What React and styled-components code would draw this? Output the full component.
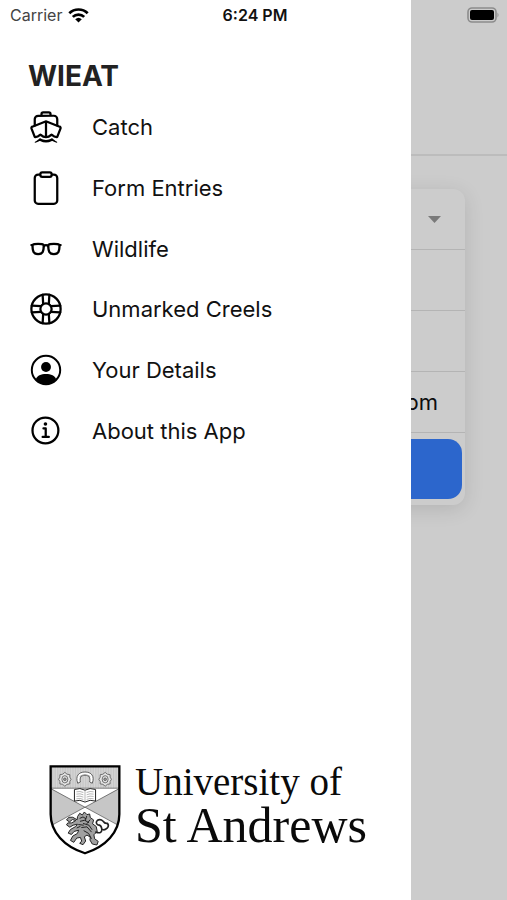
import React from "react";
import styled, { createGlobalStyle } from "styled-components";
import {
    IoBoatOutline,
    IoClipboardOutline,
    IoGlassesOutline,
    IoHelpBuoyOutline,
    IoInformationCircleOutline,
} from "react-icons/io5";

const GlobalStyle = createGlobalStyle`
    * {
        box-sizing: border-box;
    }
    body {
        margin: 0;
        background: #ffffff;
        color: #111111;
        font-family: Inter, "Liberation Sans", sans-serif;
    }
`;

const Page = styled.div`
    position: relative;
    min-height: 100vh;
    overflow: hidden;
`;

const StatusBar = styled.div`
    position: absolute;
    top: 0;
    left: 0;
    right: 0;
    display: grid;
    grid-template-columns: 1fr auto 1fr;
    align-items: center;
    height: 30px;
    padding: 0 7px 0 10px;
    font-size: 16px;
`;
const Carrier = styled.div`
    display: flex;
    align-items: center;
    gap: 6px;
    color: #444444;
`;
const Clock = styled.div`
    font-weight: 600;
`;
const Battery = styled.svg`
    justify-self: end;
`;

const Header = styled.header`
    height: 156px;
    border-bottom: 2px solid #ebebeb;
`;
const Card = styled.form`
    margin: 33px 42px;
    padding-bottom: 6px;
    border-radius: 12px;
    background: #ffffff;
    box-shadow: 0 4px 20px rgba(0, 0, 0, 0.12);
`;
const Field = styled.div`
    display: flex;
    align-items: center;
    height: 61px;
    padding: 0 24px;
    border-bottom: 1px solid #e2e2e2;
`;
const Select = styled.select`
    flex: 1;
    min-width: 0;
    border: 0;
    background: none;
    appearance: none;
`;
const Input = styled.input`
    flex: 1;
    min-width: 0;
    padding: 0 3px;
    border: 0;
    background: none;
    color: #111111;
    font: inherit;
    font-size: 22px;
    text-align: right;
`;
const Submit = styled.button`
    display: block;
    width: calc(100% - 6px);
    height: 60px;
    margin: 6px 3px 0;
    border: 0;
    border-radius: 14px;
    background: #3880ff;
`;

const Backdrop = styled.div`
    position: absolute;
    inset: 0;
    background: rgba(0, 0, 0, 0.2);
`;
const Drawer = styled.aside`
    position: absolute;
    top: 0;
    bottom: 0;
    left: 0;
    display: flex;
    flex-direction: column;
    width: 81%;
    padding: 60px 28px 45px;
    background: #ffffff;
`;
const Title = styled.h1`
    margin: 0;
    color: #222222;
    font-size: 28px;
    font-weight: 700;
    line-height: 32px;
`;
const Menu = styled.nav`
    display: grid;
    grid-auto-rows: 1fr;
    height: 364px;
    margin-top: 5px;
`;
const MenuLink = styled.a`
    display: flex;
    align-items: center;
    gap: 28px;
    color: #111111;
    font-size: 22px;
    text-decoration: none;

    svg {
        flex: none;
        width: 36px;
        height: 36px;
        color: #000000;
    }
`;
const Brand = styled.div`
    display: flex;
    align-items: flex-start;
    gap: 14px;
    margin-top: auto;
    padding-left: 21px;

    svg {
        flex: none;
    }
`;
const BrandName = styled.div`
    color: #0a0a0a;
    font-family: "Palatino Linotype", Palatino, "Liberation Serif", serif;
    font-size: 50px;
    line-height: 52px;
    white-space: nowrap;
`;
const BrandTop = styled.div`
    font-size: 39px;
    line-height: 34px;
`;

const WifiIcon = () => (
    <svg width="21" height="15" viewBox="0 0 21 15" aria-hidden="true">
        <g fill="none" stroke="#000" strokeWidth="2.7">
            <path d="M1.3 5.3a13 13 0 0 1 18.4 0" />
            <path d="M4.8 8.9a8.1 8.1 0 0 1 11.4 0" />
        </g>
        <path d="M10.5 14.6 7.2 11.2a4.8 4.8 0 0 1 6.6 0z" />
    </svg>
);

const BatteryIcon = () => (
    <Battery width="33" height="17" viewBox="0 0 33 17" aria-hidden="true">
        <rect x="1" y="1" width="28" height="14" rx="4" fill="none" stroke="#8c8c8c" strokeWidth="1.6" />
        <rect x="3" y="3" width="24" height="10" rx="2" />
        <path d="M30.5 5.5q2 2.5 0 5z" fill="#8c8c8c" />
    </Battery>
);

const PersonIcon = () => (
    <svg viewBox="0 0 512 512" aria-hidden="true">
        <circle cx="256" cy="256" r="202" fill="none" stroke="currentColor" strokeWidth="28" />
        <circle cx="256" cy="213" r="70" fill="currentColor" />
        <path
            d="M112 388c14-52 74-76 144-76s130 24 144 76c-32 46-88 73-144 73s-112-27-144-73z"
            fill="currentColor"
        />
    </svg>
);

const Mascle = ({ x }) => (
    <g transform={`translate(${x} 72)`} fill="none" stroke="#555" strokeWidth="2.4">
        <path d="M0-21Q6-13 15-14 13-6 19 0 13 6 15 14 6 13 0 21-6 13-15 14-13 6-19 0-13-6-15-14-6-13 0-21z" fill="#e4e4e4" />
        <ellipse rx="9" ry="11" />
        <circle r="4" fill="#999" />
    </g>
);

const Crest = () => (
    <svg width="72" height="90" viewBox="26 29 218 272" role="img" aria-label="Coat of arms">
        <defs>
            <pattern id="lines" width="6" height="6" patternUnits="userSpaceOnUse">
                <path d="M0 3h6" stroke="#666" strokeWidth="1.8" />
            </pattern>
            <pattern id="bars" width="5" height="5" patternUnits="userSpaceOnUse">
                <path d="M2 0v5" stroke="#999" strokeWidth="1.4" />
            </pattern>
            <clipPath id="shield">
                <path d="M31 33H239V178C239 232 198 276 135 296 72 276 31 232 31 178z" />
            </clipPath>
        </defs>
        <g clipPath="url(#shield)">
            <path d="M26 29h218v272H26z" fill="#fff" />
            <path d="M31 33h208v66H31z" fill="#e2e2e2" />
            <path d="M31 33h208v66H31z" fill="url(#bars)" />
            <path d="M31 99 135 157 31 212zM239 99 135 157 239 212z" fill="#eee" />
            <path d="M31 99 135 157 31 212zM239 99 135 157 239 212z" fill="url(#lines)" />
            <path d="M31 99h208M31 100l208 113M239 100 31 213" fill="none" stroke="#444" strokeWidth="2" />
        </g>
        <Mascle x={74} />
        <Mascle x={196} />
        <path
            d="M113 84C105 62 116 50 135 50s30 12 22 34l-8-4c3-13-2-20-14-20s-17 7-14 20z"
            fill="#fff"
            stroke="#444"
            strokeWidth="2.5"
        />
        <path d="M119 64q16-11 32 0" fill="none" stroke="#888" strokeWidth="3" />
        <path
            d="M103 103q17-7 32 2 15-9 32-2v35q-17-6-32 3-15-9-32-3z"
            fill="#fff"
            stroke="#222"
            strokeWidth="3"
        />
        <path
            d="M135 105v35M109 110q11-3 21 2M109 117q11-3 21 2M109 124q11-3 21 2M109 131q11-3 21 2M140 112q10-5 21-2M140 119q10-5 21-2M140 126q10-5 21-2M140 133q10-5 21-2"
            fill="none"
            stroke="#777"
            strokeWidth="1.6"
        />
        <g fill="#a0a0a0" stroke="#222" strokeWidth="3" strokeLinejoin="round" strokeLinecap="round">
            <path d="M113 184 119 175 127 180 133 171 141 179 149 177 151 188 161 195 158 207 169 215 172 230 162 240 164 252 175 260 171 271 157 268 150 256 151 247 141 241 133 246 137 259 129 270 119 266 125 259 121 248 110 250 101 263 91 257 98 244 112 236 116 226 102 230 94 239 84 235 91 224 107 215 112 208 99 211 89 217 79 210 83 204 95 204 107 197 97 194 88 201 79 195 86 187 98 187 110 194z" />
            <path
                d="M168 232q18 6 18-8-1-14-12-14-9-6-1-14 9-5 17 3 5 8 13 6 6 8-1 15-9 8-16 3"
                fill="none"
                strokeWidth="5"
            />
            <path
                d="M120 190l9-4 8 5M121 199l13-3 12 7M130 206l17 5 9 13M125 218l16-2 13 15M132 228l14 8 8 15M111 219l9-4M116 209l14 2M140 184l-4 13M150 195l-9 11"
                fill="none"
            />
        </g>
        <path
            d="M31 33H239V178C239 232 198 276 135 296 72 276 31 232 31 178z"
            fill="none"
            stroke="#000"
            strokeWidth="7"
        />
    </svg>
);

const menuItems = [
    { label: "Catch", href: "#catch", Icon: IoBoatOutline },
    { label: "Form Entries", href: "#entries", Icon: IoClipboardOutline },
    { label: "Wildlife", href: "#wildlife", Icon: IoGlassesOutline },
    { label: "Unmarked Creels", href: "#creels", Icon: IoHelpBuoyOutline },
    { label: "Your Details", href: "#details", Icon: PersonIcon },
    { label: "About this App", href: "#about", Icon: IoInformationCircleOutline },
];

const App = () => {
    return (
        <>
            <GlobalStyle />
            <Page>
                <Header />
                <Card>
                    <Field>
                        <Select aria-label="Vessel" />
                        <svg width="13" height="7" viewBox="0 0 13 7" aria-hidden="true">
                            <path d="M0 0h13L6.5 7z" fill="#999999" />
                        </svg>
                    </Field>
                    <Field>
                        <Input aria-label="Latitude" />
                    </Field>
                    <Field>
                        <Input aria-label="Longitude" />
                    </Field>
                    <Field>
                        <Input aria-label="Time" defaultValue="pm" />
                    </Field>
                    <Submit type="button" aria-label="Save" />
                </Card>
                <Backdrop />
                <Drawer>
                    <Title>WIEAT</Title>
                    <Menu>
                        {menuItems.map(({ label, href, Icon }) => (
                            <MenuLink key={label} href={href}>
                                <Icon />
                                {label}
                            </MenuLink>
                        ))}
                    </Menu>
                    <Brand>
                        <Crest />
                        <BrandName>
                            <BrandTop>University of</BrandTop>
                            St Andrews
                        </BrandName>
                    </Brand>
                </Drawer>
                <StatusBar>
                    <Carrier>
                        Carrier
                        <WifiIcon />
                    </Carrier>
                    <Clock>6:24 PM</Clock>
                    <BatteryIcon />
                </StatusBar>
            </Page>
        </>
    );
};
export default App;
